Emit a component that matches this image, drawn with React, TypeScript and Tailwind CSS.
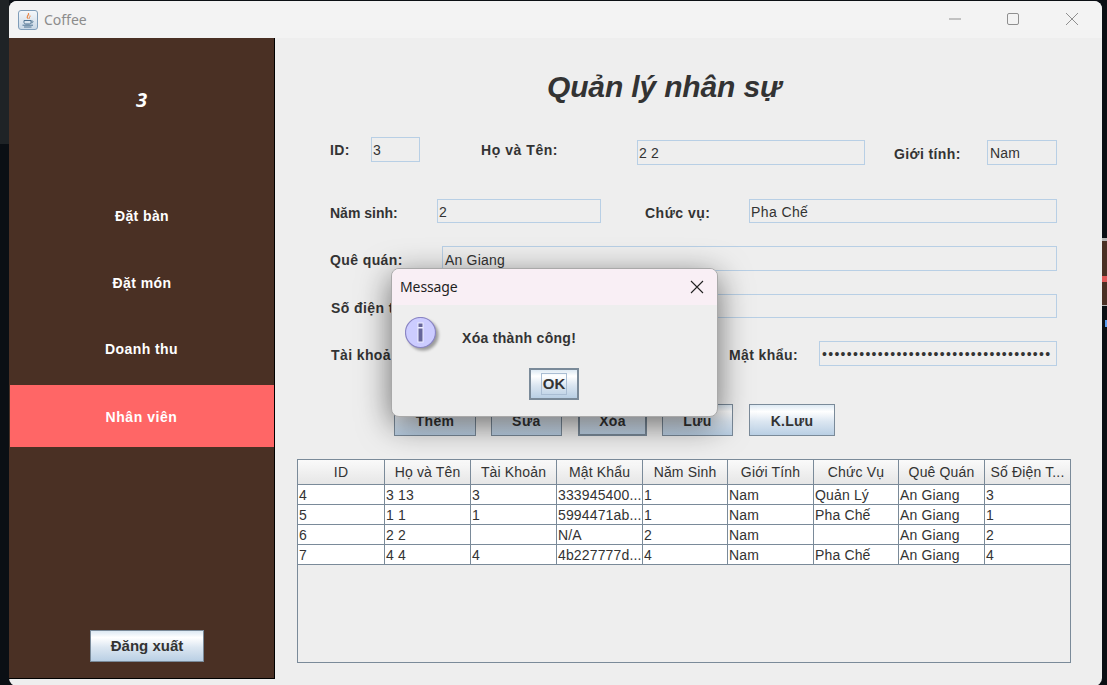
import React from "react";

const grad = "bg-[linear-gradient(180deg,#dde9f3_0%,#ffffff_22%,#dbe6f1_55%,#b9cfe4_100%)]";
const btn = "flex items-center justify-center border border-[#7a8a99] " + grad + " font-bold text-[#333333]";
const label = "text-[14px] font-bold text-[#333333] leading-[16px] whitespace-nowrap";
const input = "border border-[#b8cfe5] text-[14px] text-[#333333] flex items-center leading-[16px] whitespace-nowrap overflow-hidden";
const menu = "shrink-0 flex items-center justify-center text-[14px] font-bold text-white";

const cols = [87, 86, 86, 86, 85, 86, 85, 86, 85];
const headers = ["ID", "Họ và Tên", "Tài Khoản", "Mật Khẩu", "Năm Sinh", "Giới Tính", "Chức Vụ", "Quê Quán", "Số Điện T..."];
const rows = [
  ["4", "3 13", "3", "333945400...", "1", "Nam", "Quản Lý", "An Giang", "3"],
  ["5", "1 1", "1", "5994471ab...", "1", "Nam", "Pha Chế", "An Giang", "1"],
  ["6", "2 2", "", "N/A", "2", "Nam", "", "An Giang", "2"],
  ["7", "4 4", "4", "4b227777d...", "4", "Nam", "Pha Chế", "An Giang", "4"],
];

function JavaIcon() {
  return (
    <div className="w-[20px] h-[20px] rounded-[3px] border border-[#7f9db9] bg-[linear-gradient(180deg,#f4f7fa,#c9d8e6)] flex items-center justify-center">
      <svg width="14" height="16" viewBox="0 0 14 16" fill="none">
        <path d="M7.5 1C8.8 3 5.5 4 6.5 6.5C5 5 7.5 3 7.5 1Z" fill="#e8762c" stroke="#e8762c" strokeWidth="0.6" />
        <path d="M9 3.5C9.5 5 7.5 5.5 8 7" stroke="#e8762c" strokeWidth="0.9" />
        <path d="M3 8.5H10V10.5C10 11.5 9 12 8 12H5C4 12 3 11.5 3 10.5Z" stroke="#4f7391" strokeWidth="1" />
        <path d="M10 9H11.5C12.5 9 12.5 11 10 11" stroke="#4f7391" strokeWidth="0.8" />
        <path d="M1.5 13.2H12M3 15H10.5" stroke="#4f7391" strokeWidth="1" />
      </svg>
    </div>
  );
}

function InfoIcon() {
  return (
    <svg width="38" height="38" viewBox="0 0 38 38">
      <defs>
        <filter id="s" x="-30%" y="-30%" width="170%" height="170%">
          <feGaussianBlur stdDeviation="1.5" />
        </filter>
      </defs>
      <circle cx="18" cy="18" r="15.5" fill="#000" opacity="0.35" filter="url(#s)" />
      <circle cx="15.5" cy="15.5" r="15" fill="#ccccff" stroke="#8a85c4" strokeWidth="1.2" />
      <rect x="12.5" y="5.5" width="6" height="20" fill="#eeeeff" />
      <rect x="13.5" y="6.5" width="4" height="3.5" fill="#66669a" />
      <rect x="13.5" y="11.5" width="4" height="13" fill="#66669a" />
    </svg>
  );
}

export default function App() {
  return (
    <div className="w-[1107px] h-[685px] overflow-hidden bg-[#0b0f14] pt-[1px] pl-[9px] pr-[5px] relative font-['Liberation_Sans',Arial,sans-serif]">
      <div className="absolute left-0 top-0 w-[9px] h-[144px] bg-[#1f2326]" />
      <div className="absolute left-[1102px] top-[238px] w-[5px] h-[68px] bg-[#4a3024] border-t-[3px] border-t-[#b5b5b5] border-b border-b-[#b5b5b5]" />
      <div className="absolute left-[1102px] top-[276px] w-[5px] h-[6px] bg-[#e05a5a]" />
      <div className="absolute left-[1105px] top-[320px] w-[2px] h-[7px] bg-[#5a9cf0]" />

      <div className="w-[1093px] h-[685px] rounded-[8px] overflow-hidden bg-[#eeeeee] flex flex-col relative">
        <div className="h-[37px] shrink-0 bg-[#f3f3f3] flex items-center pl-[9px]">
          <JavaIcon />
          <span className="ml-[6px] text-[14px] text-[#8c8c8c] font-['Noto_Sans',sans-serif]">Coffee</span>
          <div className="ml-auto flex items-center pb-[2px]">
            <svg width="12" height="12" viewBox="0 0 12 12" className="mr-[46px]"><path d="M0 6H12" stroke="#8f8f8f" strokeWidth="1" /></svg>
            <svg width="12" height="12" viewBox="0 0 12 12" className="mr-[47px]"><rect x="0.5" y="0.5" width="11" height="11" rx="1.5" fill="none" stroke="#8f8f8f" strokeWidth="1" /></svg>
            <svg width="12" height="12" viewBox="0 0 12 12" className="mr-[24px]"><path d="M0 0L12 12M12 0L0 12" stroke="#8f8f8f" strokeWidth="1" /></svg>
          </div>
        </div>
        <div className="flex flex-1 min-h-0">
          <aside className="w-[266px] h-[641px] shrink-0 bg-[#4a3024] border-r border-b border-black flex flex-col pl-[1px]">
            <div className="h-[124px] shrink-0 flex items-center justify-center text-[20px] font-bold italic text-white font-['Open_Sans',sans-serif] pr-[1px]">3</div>
            <div className={menu + " h-[67px] mt-[21px] tracking-[0.4px]"}>Đặt bàn</div>
            <div className={menu + " h-[66px] tracking-[0.4px]"}>Đặt món</div>
            <div className={menu + " h-[66px] pr-[1px] tracking-[0.4px]"}>Doanh thu</div>
            <div className={menu + " h-[62px] mt-[3px] pt-[3px] pr-[1px] bg-[#ff6666] tracking-[0.55px]"}>Nhân viên</div>
            <div className={btn + " w-[114px] h-[32px] mt-[183px] ml-[80px] text-[15px]"}>Đăng xuất</div>
          </aside>
          <main className="flex-1 flex flex-col min-w-0">
            <h1 className="h-[34px] mt-[32px] ml-[272px] text-[30px] leading-[34px] font-bold italic text-[#333333] whitespace-nowrap tracking-[-0.15px]">Quản lý nhân sự</h1>

            <div className="flex h-[28px] mt-[33px] ml-[55px]">
              <span className={label + " w-[41px] mt-[5px] tracking-[0.4px]"}>ID:</span>
              <div className={input + " w-[49px] h-[25px] pl-[1px] tracking-[0.2px]"}>3</div>
              <span className={label + " ml-[61px] w-[156px] mt-[5px] tracking-[0.55px]"}>Họ và Tên:</span>
              <div className={input + " w-[228px] h-[25px] mt-[3px] pl-[1px] tracking-[0.2px]"}>2 2</div>
              <span className={label + " ml-[29px] w-[93px] mt-[9px] tracking-[0.4px]"}>Giới tính:</span>
              <div className={input + " w-[70px] h-[25px] mt-[3px] pl-[2px] tracking-[0.2px]"}>Nam</div>
            </div>

            <div className="flex h-[24px] mt-[34px] ml-[55px]">
              <span className={label + " w-[107px] mt-[6px]"}>Năm sinh:</span>
              <div className={input + " w-[164px] pl-[1px] pt-[1px] tracking-[0.2px]"}>2</div>
              <span className={label + " ml-[44px] w-[104px] mt-[6px] tracking-[0.5px]"}>Chức vụ:</span>
              <div className={input + " w-[308px] pl-[1px] pt-[2px] tracking-[0.4px]"}>Pha Chế</div>
            </div>

            <div className="flex h-[25px] mt-[23px] ml-[55px]">
              <span className={label + " w-[112px] mt-[6px] tracking-[0.4px]"}>Quê quán:</span>
              <div className={input + " w-[615px] pl-[2px] pt-[2px] tracking-[0.2px]"}>An Giang</div>
            </div>

            <div className="flex h-[24px] mt-[23px] ml-[56px]">
              <span className={label + " w-[111px] mt-[6px] tracking-[0.4px]"}>Số điện thoại:</span>
              <div className={input + " w-[615px] pl-[2px] pt-[1px] tracking-[0.2px]"}>2</div>
            </div>

            <div className="flex h-[25px] mt-[23px] ml-[56px]">
              <span className={label + " w-[111px] mt-[6px] tracking-[0.4px]"}>Tài khoản:</span>
              <div className={input + " w-[200px]"}></div>
              <span className={label + " ml-[87px] w-[90px] mt-[6px] tracking-[0.4px]"}>Mật khẩu:</span>
              <div className={input + " w-[238px] pl-[2px] pt-[1px] tracking-[1.3px]"}>•••••••••••••••••••••••••••••••••••••</div>
            </div>

            <div className="flex h-[32px] mt-[38px] ml-[119px] text-[14px]">
              <div className={btn + " w-[82px] pt-[2px] tracking-[0.3px]"}>Thêm</div>
              <div className={btn + " w-[71px] ml-[15px] pt-[2px] tracking-[0.5px]"}>Sửa</div>
              <div className={btn + " w-[69px] ml-[16px] pt-[2px] tracking-[0.3px] ring-1 ring-inset ring-[#7a8a99]"}>Xóa</div>
              <div className={btn + " w-[71px] ml-[15px] pt-[2px] tracking-[0.5px]"}>Lưu</div>
              <div className={btn + " w-[86px] ml-[16px] pt-[2px] tracking-[0.3px]"}>K.Lưu</div>
            </div>

            <div className="w-[774px] h-[204px] mt-[23px] ml-[22px] border border-[#7a8a99] bg-[#eeeeee] text-[14px] text-[#333333] tracking-[0.15px]">
              <div className="flex h-[25px] border-b border-[#7a8a99]">
                {headers.map((h, i) => (
                  <div key={h} style={{ width: cols[i] }} className="shrink-0 flex items-center justify-center pt-[1px] border-r border-[#7a8a99] bg-[linear-gradient(180deg,#fafafa,#e6e6e6)] whitespace-nowrap last:border-r-0">{h}</div>
                ))}
              </div>
              {rows.map((r, ri) => (
                <div key={ri} className="flex h-[20px] border-b border-[#7a8a99] bg-white">
                  {r.map((c, i) => (
                    <div key={i} style={{ width: cols[i] }} className="shrink-0 flex items-center pl-[1px] pt-[1px] border-r border-[#7a8a99] whitespace-nowrap last:border-r-0 overflow-hidden">{c}</div>
                  ))}
                </div>
              ))}
            </div>
          </main>
        </div>
      </div>

      <div className="absolute left-[391px] top-[268px] w-[327px] h-[149px] rounded-[8px] overflow-hidden border border-[#a9a9a9] bg-[#eeeeee] shadow-[0_8px_32px_rgba(0,0,0,0.55)]">
        <div className="h-[36px] bg-[#f9eff5] flex items-center pl-[8px] pr-[13px]">
          <span className="text-[14px] text-[#1f1f1f] font-['Noto_Sans',sans-serif] tracking-[-0.1px] pb-[1px]">Message</span>
          <svg width="14" height="14" viewBox="0 0 14 14" className="ml-auto"><path d="M1 1L13 13M13 1L1 13" stroke="#222222" strokeWidth="1.1" /></svg>
        </div>
        <div className="flex items-start pl-[13px] pt-[12px]">
          <InfoIcon />
          <span className="ml-[19px] mt-[13px] text-[14px] font-bold text-[#333333] leading-[16px] tracking-[0.3px]">Xóa thành công!</span>
        </div>
        <div className="flex justify-center mt-[13px] pr-[1px]">
          <div className={"w-[50px] h-[32px] border-2 border-[#7a8a99] flex items-center justify-center " + grad}>
            <span className="border border-[#a9bdd3] px-[1px] h-[22px] flex items-center text-[15px] font-bold text-[#333333]">OK</span>
          </div>
        </div>
      </div>
    </div>
  );
}
